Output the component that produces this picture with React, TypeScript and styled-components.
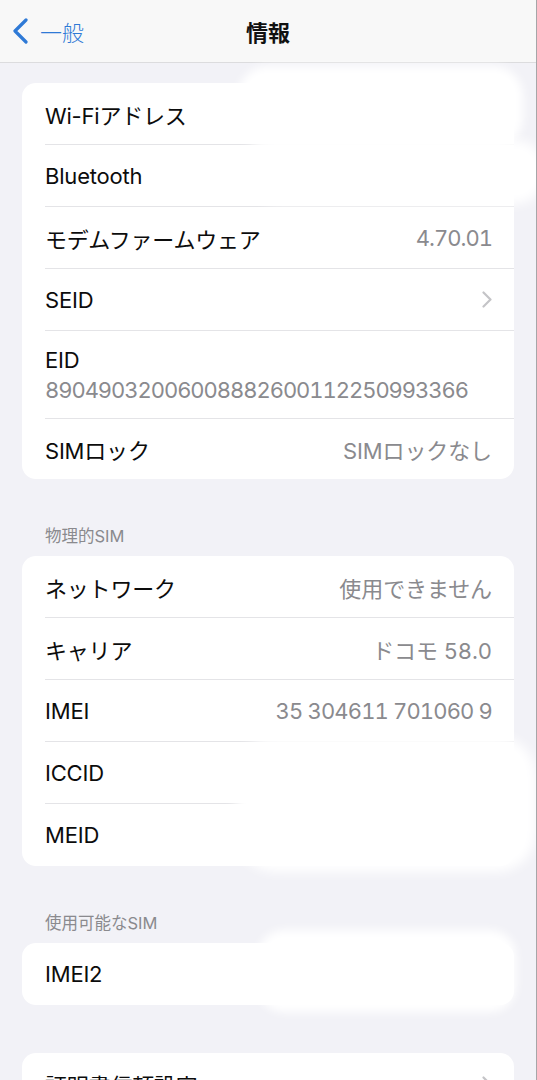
import React from "react";
import styled, { createGlobalStyle } from "styled-components";

const Global = createGlobalStyle`
  html, body { margin: 0; padding: 0; background: #f2f2f7; }
  body { font-family: Inter, "Noto Sans CJK JP", sans-serif; -webkit-font-smoothing: antialiased; }
  * { box-sizing: border-box; }
`;

const Page = styled.div`
  position: relative;
  width: 537px;
  height: 1080px;
  overflow: hidden;
  background: #f2f2f7;
  border-right: 1px solid #a6a6a8;
`;

const NavBar = styled.div`
  height: 63px;
  background: #f8f8f8;
  border-bottom: 1px solid #dcdcde;
  display: grid;
  grid-template-columns: 1fr auto 1fr;
  align-items: center;
  padding: 0 12px;
`;

const Back = styled.div`
  display: flex;
  align-items: center;
  gap: 11px;
  color: #2f7ad6;
  font-size: 22px;
  font-weight: 300;
`;

const Title = styled.div`
  font-size: 22px;
  font-weight: 700;
  color: #111;
`;

const Content = styled.div`
  padding: 20px 22px 0;
  display: flex;
  flex-direction: column;
`;

const Card = styled.div<{ $mt?: number }>`
  background: #fff;
  border-radius: 14px;
  overflow: hidden;
  margin-top: ${(p) => p.$mt ?? 0}px;
`;

const SectionHeader = styled.div`
  padding: 47px 0 10px 23px;
  font-size: 16.5px;
  color: #8a8a8e;
  line-height: 20px;
`;

const Row = styled.div<{ $h?: number }>`
  padding-left: 23px;
  min-height: ${(p) => p.$h ?? 62}px;
  display: flex;
  &:last-child > div { border-bottom: none; }
`;

const RowInner = styled.div`
  flex: 1;
  display: flex;
  align-items: center;
  justify-content: space-between;
  padding-right: 22px;
  border-bottom: 1px solid #e4e4e7;
`;

const StackInner = styled(RowInner)`
  flex-direction: column;
  align-items: flex-start;
  justify-content: center;
  gap: 4px;
`;

const Label = styled.span`
  font-size: 22px;
  color: #0c0c0c;
  letter-spacing: -0.2px;
`;

const Value = styled.span<{ $ls?: number }>`
  font-size: 22px;
  color: #8a8a8e;
  font-variant-numeric: tabular-nums;
  letter-spacing: ${(p) => p.$ls ?? -0.1}px;
`;

const Redaction = styled.div<{ $r: number; $b: number }>`
  position: absolute;
  background: #fff;
  border-radius: ${(p) => p.$r}px;
  filter: blur(${(p) => p.$b}px);
`;

const Chevron = () => (
  <svg width="10" height="17" viewBox="0 0 10 17" fill="none">
    <path d="M1.5 1.5 L8.5 8.5 L1.5 15.5" stroke="#c4c4c7" strokeWidth="2.2" strokeLinecap="round" strokeLinejoin="round" />
  </svg>
);

const BackChevron = () => (
  <svg width="17" height="26" viewBox="0 0 17 26" fill="none">
    <path d="M14 2 L3 13 L14 24" stroke="#2f7ad6" strokeWidth="3.2" strokeLinecap="round" strokeLinejoin="round" />
  </svg>
);

type Item = { label: string; value?: string; chevron?: boolean; ls?: number };

const ListRow = ({ label, value, chevron, ls }: Item) => (
  <Row>
    <RowInner>
      <Label>{label}</Label>
      {value && <Value $ls={ls}>{value}</Value>}
      {chevron && <Chevron />}
    </RowInner>
  </Row>
);

const blobs = [
  { left: 238, top: 66, width: 285, height: 82, r: 30, b: 5 },
  { left: 250, top: 140, width: 295, height: 64, r: 30, b: 6 },
  { left: 236, top: 736, width: 300, height: 136, r: 40, b: 6 },
  { left: 258, top: 930, width: 258, height: 82, r: 26, b: 5 },
];

export default function App() {
  return (
    <Page>
      <Global />
      <NavBar>
        <Back>
          <BackChevron />
          <span>一般</span>
        </Back>
        <Title>情報</Title>
        <div />
      </NavBar>
      <Content>
        <Card>
          <ListRow label="Wi-Fiアドレス" />
          <ListRow label="Bluetooth" />
          <ListRow label="モデムファームウェア" value="4.70.01" ls={-1} />
          <ListRow label="SEID" chevron />
          <Row $h={88}>
            <StackInner>
              <Label>EID</Label>
              <Value $ls={-1.05}>89049032006008882600112250993366</Value>
            </StackInner>
          </Row>
          <Row $h={60}>
            <RowInner>
              <Label>SIMロック</Label>
              <Value>SIMロックなし</Value>
            </RowInner>
          </Row>
        </Card>
        <SectionHeader>物理的SIM</SectionHeader>
        <Card>
          <ListRow label="ネットワーク" value="使用できません" />
          <ListRow label="キャリア" value="ドコモ 58.0" />
          <ListRow label="IMEI" value="35 304611 701060 9" ls={-0.85} />
          <ListRow label="ICCID" />
          <ListRow label="MEID" />
        </Card>
        <SectionHeader>使用可能なSIM</SectionHeader>
        <Card>
          <ListRow label="IMEI2" />
        </Card>
        <Card $mt={48}>
          <ListRow label="証明書信頼設定" chevron />
        </Card>
      </Content>
      {blobs.map((b, i) => (
        <Redaction
          key={i}
          $r={b.r}
          $b={b.b}
          style={{ left: b.left, top: b.top, width: b.width, height: b.height }}
        />
      ))}
    </Page>
  );
}
